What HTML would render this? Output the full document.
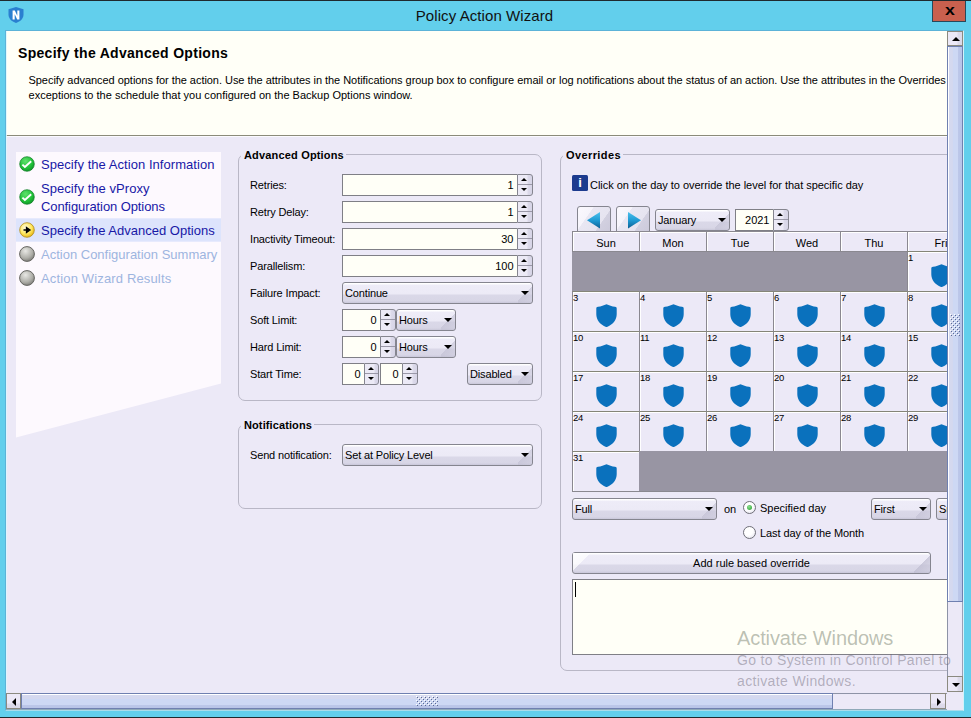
<!DOCTYPE html><html><head><meta charset="utf-8"><title>Policy Action Wizard</title><style>
*{box-sizing:border-box;margin:0;padding:0}
html,body{width:971px;height:718px;overflow:hidden}
body{position:relative;background:#62cfec;font-family:"Liberation Sans",Arial,sans-serif;font-size:11px;color:#000}
.a{position:absolute}
.t{position:absolute;white-space:nowrap;line-height:14px;height:14px}
#title{left:-1px;width:971px;top:5px;height:22px;line-height:22px;text-align:center;font-size:15px;color:#111;letter-spacing:.08px}
#close{left:932px;top:1px;width:34px;height:21px;background:#c9604e;border:1px solid #27495b;border-top:none}
#close span{position:absolute;left:11.5px;top:-1px;font-weight:bold;font-size:15px;line-height:20px;transform:scaleX(1.18);transform-origin:0 0}
#frame{left:6px;top:31px;width:957px;height:679px;background:#ece9f7;overflow:hidden}
#view{left:0;top:0;width:941px;height:662px;overflow:hidden}
#hdr{left:0;top:0;width:941px;height:104px;background:#fffff7}
#hdrline{left:0;top:104px;width:941px;height:1px;background:#8b8b7a}
h1{position:absolute;left:12px;top:13px;font-size:14px;line-height:18px;font-weight:bold;letter-spacing:.3px;white-space:nowrap}
.sub{left:22.5px;font-size:11px;letter-spacing:-.02px}
.step{position:absolute;left:35px;font-size:13px;line-height:18px;letter-spacing:.05px;white-space:nowrap;color:#1818a6}
.step.dis{color:#9db5e0}
.ico{position:absolute;left:12.6px;width:16px;height:16px}
.gb{position:absolute;border:1px solid #b9b7c6;border-radius:7px}
.gbt{position:absolute;top:-7px;left:2px;padding:0 2px 0 3px;background:#ece9f7;font-weight:bold;font-size:11px;line-height:14px;letter-spacing:.1px;white-space:nowrap}
.lbl{position:absolute;left:244px;font-size:11px;line-height:14px;white-space:nowrap;letter-spacing:-.15px}
.inp{position:absolute;height:22px;background:#fffff7;border:1px solid #7f7f86;border-right:none;text-align:right;font-size:11px;line-height:20px;padding-right:3.5px}
.spn{position:absolute;width:16px;height:22px;border:1px solid #85858f;border-radius:0 3px 3px 0;background:linear-gradient(90deg,#eceaf6 0,#eceaf6 9px,#dcdaea 10px,#d6d4e6 100%)}
.spn:before{content:"";position:absolute;left:0;right:0;top:9px;height:1px;background:#9a98a8}
.spn i{position:absolute;left:3.4px;width:0;height:0;border-left:3.6px solid transparent;border-right:3.6px solid transparent}
.spn i.u{top:2.6px;border-bottom:3.7px solid #000}
.spn i.d{top:12.8px;border-top:3.7px solid #000}
.cmb{position:absolute;height:22px;border:1px solid #85858f;border-radius:3px;font-size:11px;line-height:20px;padding-left:2px;letter-spacing:-.15px;white-space:nowrap;overflow:hidden;
 background:linear-gradient(180deg,#fff 0,#fff 1px,#eeecf8 2px,#eceaf6 11px,#dad8e8 12px,#d8d6e6 18px,#c9c7d9 20px)}
.cmb:after{content:"";position:absolute;right:3.5px;top:8px;width:0;height:0;border-left:4.2px solid transparent;border-right:4.2px solid transparent;border-top:4.3px solid #000}
.cmb:before{content:"";position:absolute;right:0;top:0;width:14px;height:20px;background:linear-gradient(135deg,rgba(200,198,216,0) 50%,rgba(190,188,208,.55) 51%,rgba(200,198,216,.35) 100%)}
.btn{position:absolute;height:22px;border:1px solid #85858f;border-radius:3px;font-size:11px;line-height:20px;text-align:center;white-space:nowrap;
 background:linear-gradient(180deg,#fff 0,#fff 1px,#eeecf8 2px,#eceaf6 11px,#dad8e8 12px,#d8d6e6 18px,#c9c7d9 20px)}
.bv:before{content:"";position:absolute;left:0;top:0;width:16px;height:20px;background:linear-gradient(135deg,rgba(255,255,255,.9) 0,rgba(255,255,255,.7) 49%,rgba(255,255,255,0) 50%)}
.bv:after{content:"";position:absolute;right:0;top:0;width:16px;height:20px;background:linear-gradient(135deg,rgba(190,188,208,0) 50%,rgba(190,188,208,.7) 51%,rgba(200,198,216,.4) 100%)}
.cal{position:absolute;left:566px;top:200px;width:480px;height:261px;background:#9895a3}
.hd{position:absolute;top:0;height:20px;width:67px;background:#ece9f7;border-left:1px solid #8a8890;border-top:1px solid #8a8890;box-shadow:inset 1px 1px 0 #fff;text-align:center;font-size:11px;line-height:21px;padding-top:1px}
.c{position:absolute;width:67px;height:40px;background:#ece9f7;border-left:1px solid #8a8890;border-top:1px solid #858578;box-shadow:inset 1px 1px 0 #fff;font-size:9.5px;line-height:11.66px;letter-spacing:-.35px;padding:0}
.c svg{position:absolute;left:22.8px;top:11.8px;width:21px;height:23.4px}
.nav{position:absolute;top:175px;width:34px;height:30px;border:1px solid #85858f;border-radius:3px;background:linear-gradient(125deg,#fbf9fe 0,#f6f4fb 30%,#e9e7f3 31%,#e6e4f0 66%,#d2d0e0 67%,#cbc9da 100%)}
.rad{position:absolute;width:13px;height:13px;border-radius:50%;border:1px solid #6f6f78;background:radial-gradient(circle at 40% 35%,#fff 0,#fff 45%,#dcdae8 100%)}
</style></head><body>
<div class="a" style="left:0;top:0;width:971px;height:1px;background:#1f2a2e"></div>
<div class="a" style="left:0;top:717px;width:971px;height:1px;background:#1f2a2e"></div>
<div class="a" style="left:5px;top:30px;width:959px;height:681px;border:1px solid #5cb3d8;border-right-color:#d2f3fa;border-bottom-color:#a9dcea"></div>
<svg class="a" style="left:8px;top:7px" width="16" height="16" viewBox="0 0 16 16"><path d="M8 0 L15.5 2.2 V7.5 C15.5 11.5 12.5 14.5 8 16 C3.5 14.5 .5 11.5 .5 7.5 V2.2 Z" fill="#2a7fd0"/><path d="M4.6 12.4V3.6h2.2l2.5 5.2V3.6h2.1v8.8H9.2L6.7 7.2v5.2z" fill="#fff"/></svg>
<div id="title" class="a">Policy Action Wizard</div>
<div id="close" class="a"><span>x</span></div>
<div id="frame" class="a">
<div id="view" class="a">
<div id="hdr" class="a"><h1>Specify the Advanced Options</h1>
<div class="t sub" style="top:42px;letter-spacing:-.04px">Specify advanced options for the action. Use the attributes in the Notifications group box to configure email or log notifications about the status of an action. Use the attributes in the Overrides group box to configure</div>
<div class="t sub" style="top:57px;letter-spacing:.01px">exceptions to the schedule that you configured on the Backup Options window.</div>
</div><div id="hdrline" class="a"></div><div class="a" style="left:0;top:105px;width:941px;height:1px;background:#fbfaff"></div>
<svg class="a" style="left:10px;top:121px" width="205" height="286"><polygon points="0,0 205,0 205,231.5 0,285.5" fill="#fdf9fe"/><rect x="0" y="66.3" width="205" height="23.4" fill="#dde4fc"/></svg>
<svg class="ico" style="top:125px" viewBox="0 0 16 16"><defs><radialGradient id="g1" cx=".4" cy=".3" r=".8"><stop offset="0" stop-color="#5fe06c"/><stop offset=".6" stop-color="#1fc038"/><stop offset="1" stop-color="#0c8a24"/></radialGradient></defs><circle cx="8" cy="8" r="7.3" fill="url(#g1)" stroke="#0e7a25" stroke-width=".7"/><path d="M3.4 8.6l2.5 2.4 6.3-5.7" stroke="#fff" stroke-width="1.9" fill="none"/></svg>
<svg class="ico" style="top:158px" viewBox="0 0 16 16"><defs><radialGradient id="g2" cx=".4" cy=".3" r=".8"><stop offset="0" stop-color="#5fe06c"/><stop offset=".6" stop-color="#1fc038"/><stop offset="1" stop-color="#0c8a24"/></radialGradient></defs><circle cx="8" cy="8" r="7.3" fill="url(#g2)" stroke="#0e7a25" stroke-width=".7"/><path d="M3.4 8.6l2.5 2.4 6.3-5.7" stroke="#fff" stroke-width="1.9" fill="none"/></svg>
<svg class="ico" style="top:191px" viewBox="0 0 16 16"><defs><radialGradient id="g3" cx=".4" cy=".35" r=".75"><stop offset="0" stop-color="#fffbe0"/><stop offset=".55" stop-color="#ffe860"/><stop offset="1" stop-color="#e0a800"/></radialGradient></defs><circle cx="8" cy="8" r="7.3" fill="url(#g3)" stroke="#b08a1c" stroke-width=".8"/><path d="M4.5 8h4.5M7.5 5.6L11 8 7.5 10.4z" stroke="#000" stroke-width="1.3" fill="#000"/></svg>
<svg class="ico" style="top:215px" viewBox="0 0 16 16"><defs><radialGradient id="g4" cx=".4" cy=".3" r=".8"><stop offset="0" stop-color="#e8e8e4"/><stop offset=".6" stop-color="#aeaea8"/><stop offset="1" stop-color="#6f6f6a"/></radialGradient></defs><circle cx="8" cy="8" r="7.4" fill="url(#g4)" stroke="#666662" stroke-width="1"/></svg>
<svg class="ico" style="top:239px" viewBox="0 0 16 16"><defs><radialGradient id="g5" cx=".4" cy=".3" r=".8"><stop offset="0" stop-color="#e8e8e4"/><stop offset=".6" stop-color="#aeaea8"/><stop offset="1" stop-color="#6f6f6a"/></radialGradient></defs><circle cx="8" cy="8" r="7.4" fill="url(#g5)" stroke="#666662" stroke-width="1"/></svg>
<div class="step" style="top:125px">Specify the Action Information</div>
<div class="step" style="top:149px">Specify the vProxy<br><span style="letter-spacing:-.09px">Configuration Options</span></div>
<div class="step" style="top:191px;letter-spacing:.01px">Specify the Advanced Options</div>
<div class="step dis" style="top:215px;letter-spacing:0">Action Configuration Summary</div>
<div class="step dis" style="top:239px;letter-spacing:.15px">Action Wizard Results</div>
<div class="gb" style="left:232px;top:123px;width:304px;height:247px"><div class="gbt" style="letter-spacing:.17px">Advanced Options</div></div>
<div class="lbl" style="top:147px">Retries:</div>
<div class="inp" style="left:336px;top:143px;width:175px">1</div><div class="spn" style="left:511px;top:143px;width:16px"><i class="u"></i><i class="d"></i></div>
<div class="lbl" style="top:174px">Retry Delay:</div>
<div class="inp" style="left:336px;top:170px;width:175px">1</div><div class="spn" style="left:511px;top:170px;width:16px"><i class="u"></i><i class="d"></i></div>
<div class="lbl" style="top:201px">Inactivity Timeout:</div>
<div class="inp" style="left:336px;top:197px;width:175px">30</div><div class="spn" style="left:511px;top:197px;width:16px"><i class="u"></i><i class="d"></i></div>
<div class="lbl" style="top:228px">Parallelism:</div>
<div class="inp" style="left:336px;top:224px;width:175px">100</div><div class="spn" style="left:511px;top:224px;width:16px"><i class="u"></i><i class="d"></i></div>
<div class="lbl" style="top:255px">Failure Impact:</div><div class="cmb" style="left:336px;top:251px;width:191px">Continue</div>
<div class="lbl" style="top:282px">Soft Limit:</div>
<div class="inp" style="left:336px;top:278px;width:38px">0</div><div class="spn" style="left:374px;top:278px;width:16px"><i class="u"></i><i class="d"></i></div>
<div class="cmb" style="left:390px;top:278px;width:60px">Hours</div>
<div class="lbl" style="top:309px">Hard Limit:</div>
<div class="inp" style="left:336px;top:305px;width:38px">0</div><div class="spn" style="left:374px;top:305px;width:16px"><i class="u"></i><i class="d"></i></div>
<div class="cmb" style="left:390px;top:305px;width:60px">Hours</div>
<div class="lbl" style="top:336px">Start Time:</div>
<div class="inp" style="left:336px;top:332px;width:22px">0</div><div class="spn" style="left:358px;top:332px;width:15px"><i class="u"></i><i class="d"></i></div>
<div class="inp" style="left:374px;top:332px;width:22px">0</div><div class="spn" style="left:396px;top:332px;width:16px"><i class="u"></i><i class="d"></i></div>
<div class="cmb" style="left:461px;top:332px;width:66px">Disabled</div>
<div class="gb" style="left:232px;top:393px;width:304px;height:85px"><div class="gbt">Notifications</div></div>
<div class="lbl" style="top:417px">Send notification:</div><div class="cmb" style="left:336px;top:413px;width:191px">Set at Policy Level</div>
<div class="gb" style="left:554px;top:123px;width:480px;height:517px"><div class="gbt" style="letter-spacing:.4px">Overrides</div></div>
<div class="a" style="left:566px;top:144px;width:16px;height:16px;background:#1c3b8e;border-radius:1.5px;color:#fff;font-weight:bold;font-size:13px;line-height:16px;text-align:center">i</div>
<div class="t" style="left:584px;top:147px;letter-spacing:-.03px">Click on the day to override the level for that specific day</div>
<svg width="0" height="0" style="position:absolute"><defs><linearGradient id="ag" x1="0" y1="0" x2="0" y2="1"><stop offset="0" stop-color="#4cc0ec"/><stop offset=".5" stop-color="#1f9bd4"/><stop offset="1" stop-color="#0d5f94"/></linearGradient></defs></svg>
<div class="nav" style="left:571px"><svg class="a" style="left:9px;top:4.5px" width="14" height="17"><path d="M13 0v16.5L0 8.2z" fill="url(#ag)"/></svg></div>
<div class="nav" style="left:610px"><svg class="a" style="left:11px;top:4.5px" width="14" height="17"><path d="M0 0v16.5L13 8.2z" fill="url(#ag)"/></svg></div>
<div class="cmb" style="left:649px;top:178px;width:75px">January</div>
<div class="inp" style="left:729px;top:178px;width:38px">2021</div><div class="spn" style="left:767px;top:178px;width:16px"><i class="u"></i><i class="d"></i></div>
<div class="cal">
<div class="a" style="left:0;top:20px;width:480px;height:1px;background:#8a8890"></div><div class="a" style="left:0;top:260px;width:480px;height:1px;background:#8a8890"></div>
<div class="hd" style="left:0px">Sun</div>
<div class="hd" style="left:67px">Mon</div>
<div class="hd" style="left:134px">Tue</div>
<div class="hd" style="left:201px">Wed</div>
<div class="hd" style="left:268px">Thu</div>
<div class="hd" style="left:335px">Fri</div>
<div class="hd" style="left:402px">Sat</div>
<div class="c" style="left:335px;top:20px">1<svg viewBox="0 0 21 23"><path d="M10.5 0 C13 1.2 16 2.2 19 2.6 C20.2 2.8 20.7 3.3 20.7 4.4 V10 C20.7 16 16.5 20.5 10.5 23 C4.5 20.5 .3 16 .3 10 V4.4 C.3 3.3 .8 2.8 2 2.6 C5 2.2 8 1.2 10.5 0Z" fill="#0a71bd"/></svg></div>
<div class="c" style="left:402px;top:20px">2<svg viewBox="0 0 21 23"><path d="M10.5 0 C13 1.2 16 2.2 19 2.6 C20.2 2.8 20.7 3.3 20.7 4.4 V10 C20.7 16 16.5 20.5 10.5 23 C4.5 20.5 .3 16 .3 10 V4.4 C.3 3.3 .8 2.8 2 2.6 C5 2.2 8 1.2 10.5 0Z" fill="#0a71bd"/></svg></div>
<div class="c" style="left:0px;top:60px">3<svg viewBox="0 0 21 23"><path d="M10.5 0 C13 1.2 16 2.2 19 2.6 C20.2 2.8 20.7 3.3 20.7 4.4 V10 C20.7 16 16.5 20.5 10.5 23 C4.5 20.5 .3 16 .3 10 V4.4 C.3 3.3 .8 2.8 2 2.6 C5 2.2 8 1.2 10.5 0Z" fill="#0a71bd"/></svg></div>
<div class="c" style="left:67px;top:60px">4<svg viewBox="0 0 21 23"><path d="M10.5 0 C13 1.2 16 2.2 19 2.6 C20.2 2.8 20.7 3.3 20.7 4.4 V10 C20.7 16 16.5 20.5 10.5 23 C4.5 20.5 .3 16 .3 10 V4.4 C.3 3.3 .8 2.8 2 2.6 C5 2.2 8 1.2 10.5 0Z" fill="#0a71bd"/></svg></div>
<div class="c" style="left:134px;top:60px">5<svg viewBox="0 0 21 23"><path d="M10.5 0 C13 1.2 16 2.2 19 2.6 C20.2 2.8 20.7 3.3 20.7 4.4 V10 C20.7 16 16.5 20.5 10.5 23 C4.5 20.5 .3 16 .3 10 V4.4 C.3 3.3 .8 2.8 2 2.6 C5 2.2 8 1.2 10.5 0Z" fill="#0a71bd"/></svg></div>
<div class="c" style="left:201px;top:60px">6<svg viewBox="0 0 21 23"><path d="M10.5 0 C13 1.2 16 2.2 19 2.6 C20.2 2.8 20.7 3.3 20.7 4.4 V10 C20.7 16 16.5 20.5 10.5 23 C4.5 20.5 .3 16 .3 10 V4.4 C.3 3.3 .8 2.8 2 2.6 C5 2.2 8 1.2 10.5 0Z" fill="#0a71bd"/></svg></div>
<div class="c" style="left:268px;top:60px">7<svg viewBox="0 0 21 23"><path d="M10.5 0 C13 1.2 16 2.2 19 2.6 C20.2 2.8 20.7 3.3 20.7 4.4 V10 C20.7 16 16.5 20.5 10.5 23 C4.5 20.5 .3 16 .3 10 V4.4 C.3 3.3 .8 2.8 2 2.6 C5 2.2 8 1.2 10.5 0Z" fill="#0a71bd"/></svg></div>
<div class="c" style="left:335px;top:60px">8<svg viewBox="0 0 21 23"><path d="M10.5 0 C13 1.2 16 2.2 19 2.6 C20.2 2.8 20.7 3.3 20.7 4.4 V10 C20.7 16 16.5 20.5 10.5 23 C4.5 20.5 .3 16 .3 10 V4.4 C.3 3.3 .8 2.8 2 2.6 C5 2.2 8 1.2 10.5 0Z" fill="#0a71bd"/></svg></div>
<div class="c" style="left:402px;top:60px">9<svg viewBox="0 0 21 23"><path d="M10.5 0 C13 1.2 16 2.2 19 2.6 C20.2 2.8 20.7 3.3 20.7 4.4 V10 C20.7 16 16.5 20.5 10.5 23 C4.5 20.5 .3 16 .3 10 V4.4 C.3 3.3 .8 2.8 2 2.6 C5 2.2 8 1.2 10.5 0Z" fill="#0a71bd"/></svg></div>
<div class="c" style="left:0px;top:100px">10<svg viewBox="0 0 21 23"><path d="M10.5 0 C13 1.2 16 2.2 19 2.6 C20.2 2.8 20.7 3.3 20.7 4.4 V10 C20.7 16 16.5 20.5 10.5 23 C4.5 20.5 .3 16 .3 10 V4.4 C.3 3.3 .8 2.8 2 2.6 C5 2.2 8 1.2 10.5 0Z" fill="#0a71bd"/></svg></div>
<div class="c" style="left:67px;top:100px">11<svg viewBox="0 0 21 23"><path d="M10.5 0 C13 1.2 16 2.2 19 2.6 C20.2 2.8 20.7 3.3 20.7 4.4 V10 C20.7 16 16.5 20.5 10.5 23 C4.5 20.5 .3 16 .3 10 V4.4 C.3 3.3 .8 2.8 2 2.6 C5 2.2 8 1.2 10.5 0Z" fill="#0a71bd"/></svg></div>
<div class="c" style="left:134px;top:100px">12<svg viewBox="0 0 21 23"><path d="M10.5 0 C13 1.2 16 2.2 19 2.6 C20.2 2.8 20.7 3.3 20.7 4.4 V10 C20.7 16 16.5 20.5 10.5 23 C4.5 20.5 .3 16 .3 10 V4.4 C.3 3.3 .8 2.8 2 2.6 C5 2.2 8 1.2 10.5 0Z" fill="#0a71bd"/></svg></div>
<div class="c" style="left:201px;top:100px">13<svg viewBox="0 0 21 23"><path d="M10.5 0 C13 1.2 16 2.2 19 2.6 C20.2 2.8 20.7 3.3 20.7 4.4 V10 C20.7 16 16.5 20.5 10.5 23 C4.5 20.5 .3 16 .3 10 V4.4 C.3 3.3 .8 2.8 2 2.6 C5 2.2 8 1.2 10.5 0Z" fill="#0a71bd"/></svg></div>
<div class="c" style="left:268px;top:100px">14<svg viewBox="0 0 21 23"><path d="M10.5 0 C13 1.2 16 2.2 19 2.6 C20.2 2.8 20.7 3.3 20.7 4.4 V10 C20.7 16 16.5 20.5 10.5 23 C4.5 20.5 .3 16 .3 10 V4.4 C.3 3.3 .8 2.8 2 2.6 C5 2.2 8 1.2 10.5 0Z" fill="#0a71bd"/></svg></div>
<div class="c" style="left:335px;top:100px">15<svg viewBox="0 0 21 23"><path d="M10.5 0 C13 1.2 16 2.2 19 2.6 C20.2 2.8 20.7 3.3 20.7 4.4 V10 C20.7 16 16.5 20.5 10.5 23 C4.5 20.5 .3 16 .3 10 V4.4 C.3 3.3 .8 2.8 2 2.6 C5 2.2 8 1.2 10.5 0Z" fill="#0a71bd"/></svg></div>
<div class="c" style="left:402px;top:100px">16<svg viewBox="0 0 21 23"><path d="M10.5 0 C13 1.2 16 2.2 19 2.6 C20.2 2.8 20.7 3.3 20.7 4.4 V10 C20.7 16 16.5 20.5 10.5 23 C4.5 20.5 .3 16 .3 10 V4.4 C.3 3.3 .8 2.8 2 2.6 C5 2.2 8 1.2 10.5 0Z" fill="#0a71bd"/></svg></div>
<div class="c" style="left:0px;top:140px">17<svg viewBox="0 0 21 23"><path d="M10.5 0 C13 1.2 16 2.2 19 2.6 C20.2 2.8 20.7 3.3 20.7 4.4 V10 C20.7 16 16.5 20.5 10.5 23 C4.5 20.5 .3 16 .3 10 V4.4 C.3 3.3 .8 2.8 2 2.6 C5 2.2 8 1.2 10.5 0Z" fill="#0a71bd"/></svg></div>
<div class="c" style="left:67px;top:140px">18<svg viewBox="0 0 21 23"><path d="M10.5 0 C13 1.2 16 2.2 19 2.6 C20.2 2.8 20.7 3.3 20.7 4.4 V10 C20.7 16 16.5 20.5 10.5 23 C4.5 20.5 .3 16 .3 10 V4.4 C.3 3.3 .8 2.8 2 2.6 C5 2.2 8 1.2 10.5 0Z" fill="#0a71bd"/></svg></div>
<div class="c" style="left:134px;top:140px">19<svg viewBox="0 0 21 23"><path d="M10.5 0 C13 1.2 16 2.2 19 2.6 C20.2 2.8 20.7 3.3 20.7 4.4 V10 C20.7 16 16.5 20.5 10.5 23 C4.5 20.5 .3 16 .3 10 V4.4 C.3 3.3 .8 2.8 2 2.6 C5 2.2 8 1.2 10.5 0Z" fill="#0a71bd"/></svg></div>
<div class="c" style="left:201px;top:140px">20<svg viewBox="0 0 21 23"><path d="M10.5 0 C13 1.2 16 2.2 19 2.6 C20.2 2.8 20.7 3.3 20.7 4.4 V10 C20.7 16 16.5 20.5 10.5 23 C4.5 20.5 .3 16 .3 10 V4.4 C.3 3.3 .8 2.8 2 2.6 C5 2.2 8 1.2 10.5 0Z" fill="#0a71bd"/></svg></div>
<div class="c" style="left:268px;top:140px">21<svg viewBox="0 0 21 23"><path d="M10.5 0 C13 1.2 16 2.2 19 2.6 C20.2 2.8 20.7 3.3 20.7 4.4 V10 C20.7 16 16.5 20.5 10.5 23 C4.5 20.5 .3 16 .3 10 V4.4 C.3 3.3 .8 2.8 2 2.6 C5 2.2 8 1.2 10.5 0Z" fill="#0a71bd"/></svg></div>
<div class="c" style="left:335px;top:140px">22<svg viewBox="0 0 21 23"><path d="M10.5 0 C13 1.2 16 2.2 19 2.6 C20.2 2.8 20.7 3.3 20.7 4.4 V10 C20.7 16 16.5 20.5 10.5 23 C4.5 20.5 .3 16 .3 10 V4.4 C.3 3.3 .8 2.8 2 2.6 C5 2.2 8 1.2 10.5 0Z" fill="#0a71bd"/></svg></div>
<div class="c" style="left:402px;top:140px">23<svg viewBox="0 0 21 23"><path d="M10.5 0 C13 1.2 16 2.2 19 2.6 C20.2 2.8 20.7 3.3 20.7 4.4 V10 C20.7 16 16.5 20.5 10.5 23 C4.5 20.5 .3 16 .3 10 V4.4 C.3 3.3 .8 2.8 2 2.6 C5 2.2 8 1.2 10.5 0Z" fill="#0a71bd"/></svg></div>
<div class="c" style="left:0px;top:180px">24<svg viewBox="0 0 21 23"><path d="M10.5 0 C13 1.2 16 2.2 19 2.6 C20.2 2.8 20.7 3.3 20.7 4.4 V10 C20.7 16 16.5 20.5 10.5 23 C4.5 20.5 .3 16 .3 10 V4.4 C.3 3.3 .8 2.8 2 2.6 C5 2.2 8 1.2 10.5 0Z" fill="#0a71bd"/></svg></div>
<div class="c" style="left:67px;top:180px">25<svg viewBox="0 0 21 23"><path d="M10.5 0 C13 1.2 16 2.2 19 2.6 C20.2 2.8 20.7 3.3 20.7 4.4 V10 C20.7 16 16.5 20.5 10.5 23 C4.5 20.5 .3 16 .3 10 V4.4 C.3 3.3 .8 2.8 2 2.6 C5 2.2 8 1.2 10.5 0Z" fill="#0a71bd"/></svg></div>
<div class="c" style="left:134px;top:180px">26<svg viewBox="0 0 21 23"><path d="M10.5 0 C13 1.2 16 2.2 19 2.6 C20.2 2.8 20.7 3.3 20.7 4.4 V10 C20.7 16 16.5 20.5 10.5 23 C4.5 20.5 .3 16 .3 10 V4.4 C.3 3.3 .8 2.8 2 2.6 C5 2.2 8 1.2 10.5 0Z" fill="#0a71bd"/></svg></div>
<div class="c" style="left:201px;top:180px">27<svg viewBox="0 0 21 23"><path d="M10.5 0 C13 1.2 16 2.2 19 2.6 C20.2 2.8 20.7 3.3 20.7 4.4 V10 C20.7 16 16.5 20.5 10.5 23 C4.5 20.5 .3 16 .3 10 V4.4 C.3 3.3 .8 2.8 2 2.6 C5 2.2 8 1.2 10.5 0Z" fill="#0a71bd"/></svg></div>
<div class="c" style="left:268px;top:180px">28<svg viewBox="0 0 21 23"><path d="M10.5 0 C13 1.2 16 2.2 19 2.6 C20.2 2.8 20.7 3.3 20.7 4.4 V10 C20.7 16 16.5 20.5 10.5 23 C4.5 20.5 .3 16 .3 10 V4.4 C.3 3.3 .8 2.8 2 2.6 C5 2.2 8 1.2 10.5 0Z" fill="#0a71bd"/></svg></div>
<div class="c" style="left:335px;top:180px">29<svg viewBox="0 0 21 23"><path d="M10.5 0 C13 1.2 16 2.2 19 2.6 C20.2 2.8 20.7 3.3 20.7 4.4 V10 C20.7 16 16.5 20.5 10.5 23 C4.5 20.5 .3 16 .3 10 V4.4 C.3 3.3 .8 2.8 2 2.6 C5 2.2 8 1.2 10.5 0Z" fill="#0a71bd"/></svg></div>
<div class="c" style="left:402px;top:180px">30<svg viewBox="0 0 21 23"><path d="M10.5 0 C13 1.2 16 2.2 19 2.6 C20.2 2.8 20.7 3.3 20.7 4.4 V10 C20.7 16 16.5 20.5 10.5 23 C4.5 20.5 .3 16 .3 10 V4.4 C.3 3.3 .8 2.8 2 2.6 C5 2.2 8 1.2 10.5 0Z" fill="#0a71bd"/></svg></div>
<div class="c" style="left:0px;top:220px">31<svg viewBox="0 0 21 23"><path d="M10.5 0 C13 1.2 16 2.2 19 2.6 C20.2 2.8 20.7 3.3 20.7 4.4 V10 C20.7 16 16.5 20.5 10.5 23 C4.5 20.5 .3 16 .3 10 V4.4 C.3 3.3 .8 2.8 2 2.6 C5 2.2 8 1.2 10.5 0Z" fill="#0a71bd"/></svg></div>
</div>
<div class="cmb" style="left:566px;top:467px;width:145px">Full</div>
<div class="t" style="left:718px;top:471px">on</div>
<div class="rad" style="left:737px;top:470px"><div class="a" style="left:3px;top:3px;width:5px;height:5px;border-radius:50%;background:radial-gradient(circle at 40% 35%,#8fe08f,#1d9a2b)"></div></div>
<div class="t" style="left:754px;top:470px">Specified day</div>
<div class="cmb" style="left:865px;top:467px;width:60px">First</div>
<div class="cmb" style="left:930px;top:467px;width:75px">Sunday</div>
<div class="rad" style="left:737px;top:495px"></div>
<div class="t" style="left:754px;top:495px;letter-spacing:-.08px">Last day of the Month</div>
<div class="btn bv" style="left:566px;top:521px;width:359px">Add rule based override</div>
<div class="a" style="left:566px;top:548px;width:460px;height:76px;background:#fffff7;border:1px solid #7f7f86"></div>
<div class="a" style="left:569px;top:551px;width:1px;height:15px;background:#000"></div>
</div>
<div class="a" style="left:0;top:0;width:1px;height:679px;background:rgba(220,248,255,.85)"></div>
<div class="a" style="left:941px;top:0;width:16px;height:661px;background:#ece9f7;border-left:1px solid #8d93a6;border-right:1px solid #9aa0b8"></div>
<div class="a" style="left:941px;top:15px;width:16px;height:556px;border:1px solid #6f80b0;background:linear-gradient(90deg,#fff 0,#fff 1px,#d5d9ef 1px,#d3d8ef 5px,#cdd8f4 5px,#cdd8f4 10px,#bcc7e9 10px,#b8c4e8 100%)"></div>
<div class="a" style="left:941px;top:0;width:16px;height:15px;border:1px solid #8b8a80;background:linear-gradient(90deg,#ece9f7 0,#ece9f7 9px,#dddbeb 10px,#dad8e8 100%)"><div class="a" style="left:4px;top:5px;width:0;height:0;border-left:4.2px solid transparent;border-right:4.2px solid transparent;border-bottom:4.4px solid #000"></div></div>
<div class="a" style="left:941px;top:645px;width:16px;height:16px;border:1px solid #8b8a80;background:linear-gradient(90deg,#ece9f7 0,#ece9f7 9px,#dddbeb 10px,#dad8e8 100%)"><div class="a" style="left:4px;top:6px;width:0;height:0;border-left:4.2px solid transparent;border-right:4.2px solid transparent;border-top:4.4px solid #000"></div></div>
<svg class="a" style="left:943px;top:282px" width="14" height="24" shape-rendering="crispEdges"><rect x="1" y="1" width="1" height="1" fill="#fff"/><rect x="2" y="2" width="1" height="1" fill="#5b6a94"/><rect x="1" y="5" width="1" height="1" fill="#fff"/><rect x="2" y="6" width="1" height="1" fill="#5b6a94"/><rect x="1" y="9" width="1" height="1" fill="#fff"/><rect x="2" y="10" width="1" height="1" fill="#5b6a94"/><rect x="1" y="13" width="1" height="1" fill="#fff"/><rect x="2" y="14" width="1" height="1" fill="#5b6a94"/><rect x="1" y="17" width="1" height="1" fill="#fff"/><rect x="2" y="18" width="1" height="1" fill="#5b6a94"/><rect x="1" y="21" width="1" height="1" fill="#fff"/><rect x="2" y="22" width="1" height="1" fill="#5b6a94"/><rect x="5" y="1" width="1" height="1" fill="#fff"/><rect x="6" y="2" width="1" height="1" fill="#5b6a94"/><rect x="5" y="5" width="1" height="1" fill="#fff"/><rect x="6" y="6" width="1" height="1" fill="#5b6a94"/><rect x="5" y="9" width="1" height="1" fill="#fff"/><rect x="6" y="10" width="1" height="1" fill="#5b6a94"/><rect x="5" y="13" width="1" height="1" fill="#fff"/><rect x="6" y="14" width="1" height="1" fill="#5b6a94"/><rect x="5" y="17" width="1" height="1" fill="#fff"/><rect x="6" y="18" width="1" height="1" fill="#5b6a94"/><rect x="5" y="21" width="1" height="1" fill="#fff"/><rect x="6" y="22" width="1" height="1" fill="#5b6a94"/><rect x="9" y="1" width="1" height="1" fill="#fff"/><rect x="10" y="2" width="1" height="1" fill="#5b6a94"/><rect x="9" y="5" width="1" height="1" fill="#fff"/><rect x="10" y="6" width="1" height="1" fill="#5b6a94"/><rect x="9" y="9" width="1" height="1" fill="#fff"/><rect x="10" y="10" width="1" height="1" fill="#5b6a94"/><rect x="9" y="13" width="1" height="1" fill="#fff"/><rect x="10" y="14" width="1" height="1" fill="#5b6a94"/><rect x="9" y="17" width="1" height="1" fill="#fff"/><rect x="10" y="18" width="1" height="1" fill="#5b6a94"/><rect x="9" y="21" width="1" height="1" fill="#fff"/><rect x="10" y="22" width="1" height="1" fill="#5b6a94"/><rect x="3" y="3" width="1" height="1" fill="#fff"/><rect x="4" y="4" width="1" height="1" fill="#5b6a94"/><rect x="3" y="7" width="1" height="1" fill="#fff"/><rect x="4" y="8" width="1" height="1" fill="#5b6a94"/><rect x="3" y="11" width="1" height="1" fill="#fff"/><rect x="4" y="12" width="1" height="1" fill="#5b6a94"/><rect x="3" y="15" width="1" height="1" fill="#fff"/><rect x="4" y="16" width="1" height="1" fill="#5b6a94"/><rect x="3" y="19" width="1" height="1" fill="#fff"/><rect x="4" y="20" width="1" height="1" fill="#5b6a94"/><rect x="7" y="3" width="1" height="1" fill="#fff"/><rect x="8" y="4" width="1" height="1" fill="#5b6a94"/><rect x="7" y="7" width="1" height="1" fill="#fff"/><rect x="8" y="8" width="1" height="1" fill="#5b6a94"/><rect x="7" y="11" width="1" height="1" fill="#fff"/><rect x="8" y="12" width="1" height="1" fill="#5b6a94"/><rect x="7" y="15" width="1" height="1" fill="#fff"/><rect x="8" y="16" width="1" height="1" fill="#5b6a94"/><rect x="7" y="19" width="1" height="1" fill="#fff"/><rect x="8" y="20" width="1" height="1" fill="#5b6a94"/></svg>
<div class="a" style="left:0;top:662px;width:941px;height:17px;background:#ece9f7;border-top:1px solid #8d93a6;border-bottom:1px solid #8fa9b8"></div>
<div class="a" style="left:15px;top:662px;width:812px;height:16px;border:1px solid #6f80b0;background:linear-gradient(180deg,#fff 0,#fff 1px,#d5d9ef 1px,#d3d8ef 5px,#cdd8f4 5px,#cdd8f4 11px,#bcc7e9 11px,#b8c4e8 100%)"></div>
<div class="a" style="left:0;top:662px;width:15px;height:16px;border:1px solid #8b8a80;background:linear-gradient(180deg,#ece9f7 0,#ece9f7 9px,#dddbeb 10px,#dad8e8 100%)"><div class="a" style="left:4.6px;top:4px;width:0;height:0;border-top:4.1px solid transparent;border-bottom:4.1px solid transparent;border-right:4.3px solid #000"></div></div>
<div class="a" style="left:924px;top:662px;width:16px;height:16px;border:1px solid #8b8a80;background:linear-gradient(180deg,#ece9f7 0,#ece9f7 9px,#dddbeb 10px,#dad8e8 100%)"><div class="a" style="left:6px;top:4px;width:0;height:0;border-top:4.1px solid transparent;border-bottom:4.1px solid transparent;border-left:4.3px solid #000"></div></div>
<svg class="a" style="left:409px;top:664px" width="24" height="12" shape-rendering="crispEdges"><rect x="1" y="1" width="1" height="1" fill="#fff"/><rect x="2" y="2" width="1" height="1" fill="#5b6a94"/><rect x="1" y="5" width="1" height="1" fill="#fff"/><rect x="2" y="6" width="1" height="1" fill="#5b6a94"/><rect x="1" y="9" width="1" height="1" fill="#fff"/><rect x="2" y="10" width="1" height="1" fill="#5b6a94"/><rect x="5" y="1" width="1" height="1" fill="#fff"/><rect x="6" y="2" width="1" height="1" fill="#5b6a94"/><rect x="5" y="5" width="1" height="1" fill="#fff"/><rect x="6" y="6" width="1" height="1" fill="#5b6a94"/><rect x="5" y="9" width="1" height="1" fill="#fff"/><rect x="6" y="10" width="1" height="1" fill="#5b6a94"/><rect x="9" y="1" width="1" height="1" fill="#fff"/><rect x="10" y="2" width="1" height="1" fill="#5b6a94"/><rect x="9" y="5" width="1" height="1" fill="#fff"/><rect x="10" y="6" width="1" height="1" fill="#5b6a94"/><rect x="9" y="9" width="1" height="1" fill="#fff"/><rect x="10" y="10" width="1" height="1" fill="#5b6a94"/><rect x="13" y="1" width="1" height="1" fill="#fff"/><rect x="14" y="2" width="1" height="1" fill="#5b6a94"/><rect x="13" y="5" width="1" height="1" fill="#fff"/><rect x="14" y="6" width="1" height="1" fill="#5b6a94"/><rect x="13" y="9" width="1" height="1" fill="#fff"/><rect x="14" y="10" width="1" height="1" fill="#5b6a94"/><rect x="17" y="1" width="1" height="1" fill="#fff"/><rect x="18" y="2" width="1" height="1" fill="#5b6a94"/><rect x="17" y="5" width="1" height="1" fill="#fff"/><rect x="18" y="6" width="1" height="1" fill="#5b6a94"/><rect x="17" y="9" width="1" height="1" fill="#fff"/><rect x="18" y="10" width="1" height="1" fill="#5b6a94"/><rect x="21" y="1" width="1" height="1" fill="#fff"/><rect x="22" y="2" width="1" height="1" fill="#5b6a94"/><rect x="21" y="5" width="1" height="1" fill="#fff"/><rect x="22" y="6" width="1" height="1" fill="#5b6a94"/><rect x="21" y="9" width="1" height="1" fill="#fff"/><rect x="22" y="10" width="1" height="1" fill="#5b6a94"/><rect x="3" y="3" width="1" height="1" fill="#fff"/><rect x="4" y="4" width="1" height="1" fill="#5b6a94"/><rect x="3" y="7" width="1" height="1" fill="#fff"/><rect x="4" y="8" width="1" height="1" fill="#5b6a94"/><rect x="7" y="3" width="1" height="1" fill="#fff"/><rect x="8" y="4" width="1" height="1" fill="#5b6a94"/><rect x="7" y="7" width="1" height="1" fill="#fff"/><rect x="8" y="8" width="1" height="1" fill="#5b6a94"/><rect x="11" y="3" width="1" height="1" fill="#fff"/><rect x="12" y="4" width="1" height="1" fill="#5b6a94"/><rect x="11" y="7" width="1" height="1" fill="#fff"/><rect x="12" y="8" width="1" height="1" fill="#5b6a94"/><rect x="15" y="3" width="1" height="1" fill="#fff"/><rect x="16" y="4" width="1" height="1" fill="#5b6a94"/><rect x="15" y="7" width="1" height="1" fill="#fff"/><rect x="16" y="8" width="1" height="1" fill="#5b6a94"/><rect x="19" y="3" width="1" height="1" fill="#fff"/><rect x="20" y="4" width="1" height="1" fill="#5b6a94"/><rect x="19" y="7" width="1" height="1" fill="#fff"/><rect x="20" y="8" width="1" height="1" fill="#5b6a94"/></svg>
</div>
<div class="t" style="left:737px;top:626px;font-size:20px;line-height:24px;height:24px;color:rgba(105,115,95,.45);letter-spacing:-.1px">Activate Windows</div>
<div class="t" style="left:737px;top:651px;font-size:14px;line-height:18px;height:18px;color:rgba(105,100,115,.45);letter-spacing:.32px">Go to System in Control Panel to</div>
<div class="t" style="left:737px;top:671.5px;font-size:14px;line-height:18px;height:18px;color:rgba(105,100,115,.45);letter-spacing:.36px">activate Windows.</div>
</body></html>
